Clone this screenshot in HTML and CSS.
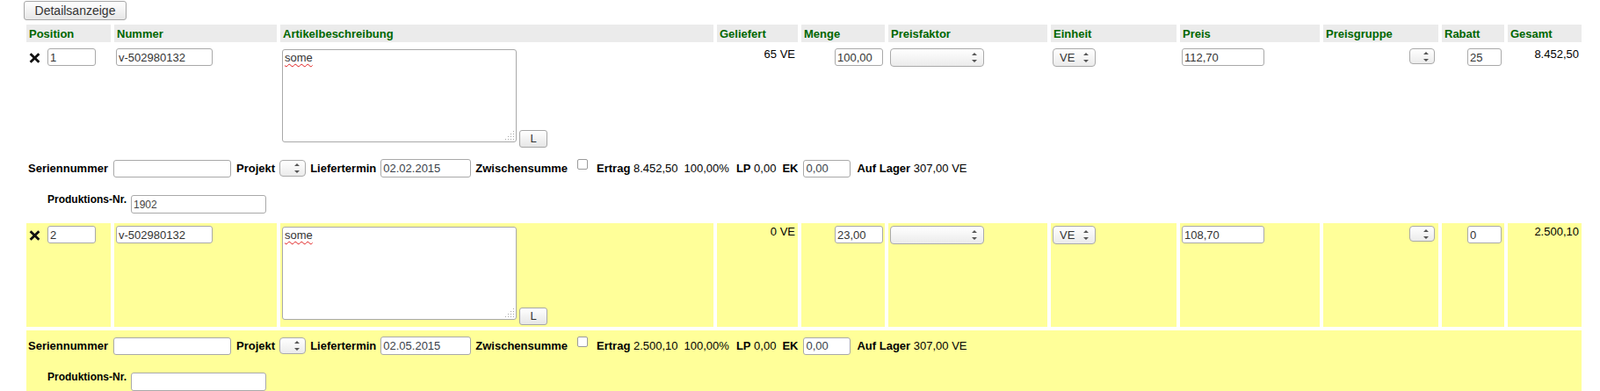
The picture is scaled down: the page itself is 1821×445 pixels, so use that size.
FILE: index.html
```html
<!DOCTYPE html>
<html lang="de">
<head>
<meta charset="utf-8">
<title>Positionen</title>
<link rel="stylesheet" href="styles.css">
</head>
<body>
<div class="page">
  <button class="btn btn-details" type="button">Detailsanzeige</button>
  <table class="items">
    <colgroup>
      <col class="c-pos"><col class="c-num"><col class="c-desc"><col class="c-del"><col class="c-qty"><col class="c-factor"><col class="c-unit"><col class="c-price"><col class="c-group"><col class="c-disc"><col class="c-total">
    </colgroup>
    <thead>
      <tr class="head">
        <th>Position</th><th>Nummer</th><th>Artikelbeschreibung</th><th>Geliefert</th><th>Menge</th><th>Preisfaktor</th><th>Einheit</th><th>Preis</th><th>Preisgruppe</th><th>Rabatt</th><th>Gesamt</th>
      </tr>
    </thead>
    <tbody>
      <tr class="item">
        <td><div class="pos"><svg class="del" width="13" height="12" viewBox="0 0 13 12"><path d="M1.6 1.2 L11.4 10.8 M11.4 1.2 L1.6 10.8" stroke="#111" stroke-width="2.8" fill="none"/></svg><input class="inp w-pos" value="1"></div></td>
        <td><input class="inp w-num" value="v-502980132"></td>
        <td><div class="desc"><div class="textarea"><span class="spell">some</span><svg class="grip" width="11" height="11" viewBox="0 0 11 11"><g fill="#a8a8a8"><rect x="9" y="0" width="1" height="1"/><rect x="6" y="3" width="1" height="1"/><rect x="9" y="3" width="1" height="1"/><rect x="3" y="6" width="1" height="1"/><rect x="6" y="6" width="1" height="1"/><rect x="9" y="6" width="1" height="1"/><rect x="0" y="9" width="1" height="1"/><rect x="3" y="9" width="1" height="1"/><rect x="6" y="9" width="1" height="1"/><rect x="9" y="9" width="1" height="1"/></g></svg></div><button class="btn btn-l" type="button">L</button></div></td>
        <td class="num">65 VE</td>
        <td class="right"><input class="inp w-qty" value="100,00"></td>
        <td><span class="sel w-factor"><span class="sel-text"></span><svg class="arr" width="6" height="11" viewBox="0 0 6 11"><path d="M3 0 L6 3 L0 3 Z M0 8 L6 8 L3 11 Z" fill="#555"/></svg></span></td>
        <td><span class="sel w-unit"><span class="sel-text">VE</span><svg class="arr" width="6" height="11" viewBox="0 0 6 11"><path d="M3 0 L6 3 L0 3 Z M0 8 L6 8 L3 11 Z" fill="#555"/></svg></span></td>
        <td><input class="inp w-price" value="112,70"></td>
        <td class="right"><span class="sel w-group"><span class="sel-text"></span><svg class="arr" width="6" height="11" viewBox="0 0 6 11"><path d="M3 0 L6 3 L0 3 Z M0 8 L6 8 L3 11 Z" fill="#555"/></svg></span></td>
        <td class="right"><input class="inp w-disc" value="25"></td>
        <td class="num">8.452,50</td>
      </tr>
      <tr class="sub">
        <td colspan="11">
          <div class="line1">
            <b>Seriennummer</b>
            <input class="inp w-serial" value="">
            <b class="ml1">Projekt</b>
            <span class="sel w-proj"><span class="sel-text"></span><svg class="arr" width="6" height="11" viewBox="0 0 6 11"><path d="M3 0 L6 3 L0 3 Z M0 8 L6 8 L3 11 Z" fill="#555"/></svg></span>
            <b>Liefertermin</b>
            <input class="inp w-date" value="02.02.2015">
            <b>Zwischensumme</b>
            <input class="chk" type="checkbox">
            <span class="stats">
              <span><b>Ertrag</b> 8.452,50</span>
              <span>100,00%</span>
              <span class="ml1"><b>LP</b> 0,00</span>
              <b>EK</b>
              <input class="inp w-ek" value="0,00">
              <span><b>Auf Lager</b> 307,00 VE</span>
            </span>
          </div>
          <div class="line2">
            <b class="small">Produktions-Nr.</b>
            <input class="inp w-prod" value="1902">
          </div>
        </td>
      </tr>
      <tr class="item alt">
        <td><div class="pos"><svg class="del" width="13" height="12" viewBox="0 0 13 12"><path d="M1.6 1.2 L11.4 10.8 M11.4 1.2 L1.6 10.8" stroke="#111" stroke-width="2.8" fill="none"/></svg><input class="inp w-pos" value="2"></div></td>
        <td><input class="inp w-num" value="v-502980132"></td>
        <td><div class="desc"><div class="textarea"><span class="spell">some</span><svg class="grip" width="11" height="11" viewBox="0 0 11 11"><g fill="#a8a8a8"><rect x="9" y="0" width="1" height="1"/><rect x="6" y="3" width="1" height="1"/><rect x="9" y="3" width="1" height="1"/><rect x="3" y="6" width="1" height="1"/><rect x="6" y="6" width="1" height="1"/><rect x="9" y="6" width="1" height="1"/><rect x="0" y="9" width="1" height="1"/><rect x="3" y="9" width="1" height="1"/><rect x="6" y="9" width="1" height="1"/><rect x="9" y="9" width="1" height="1"/></g></svg></div><button class="btn btn-l" type="button">L</button></div></td>
        <td class="num">0 VE</td>
        <td class="right"><input class="inp w-qty" value="23,00"></td>
        <td><span class="sel w-factor"><span class="sel-text"></span><svg class="arr" width="6" height="11" viewBox="0 0 6 11"><path d="M3 0 L6 3 L0 3 Z M0 8 L6 8 L3 11 Z" fill="#555"/></svg></span></td>
        <td><span class="sel w-unit"><span class="sel-text">VE</span><svg class="arr" width="6" height="11" viewBox="0 0 6 11"><path d="M3 0 L6 3 L0 3 Z M0 8 L6 8 L3 11 Z" fill="#555"/></svg></span></td>
        <td><input class="inp w-price" value="108,70"></td>
        <td class="right"><span class="sel w-group"><span class="sel-text"></span><svg class="arr" width="6" height="11" viewBox="0 0 6 11"><path d="M3 0 L6 3 L0 3 Z M0 8 L6 8 L3 11 Z" fill="#555"/></svg></span></td>
        <td class="right"><input class="inp w-disc" value="0"></td>
        <td class="num">2.500,10</td>
      </tr>
      <tr class="sub alt">
        <td colspan="11">
          <div class="line1">
            <b>Seriennummer</b>
            <input class="inp w-serial" value="">
            <b class="ml1">Projekt</b>
            <span class="sel w-proj"><span class="sel-text"></span><svg class="arr" width="6" height="11" viewBox="0 0 6 11"><path d="M3 0 L6 3 L0 3 Z M0 8 L6 8 L3 11 Z" fill="#555"/></svg></span>
            <b>Liefertermin</b>
            <input class="inp w-date" value="02.05.2015">
            <b>Zwischensumme</b>
            <input class="chk" type="checkbox">
            <span class="stats">
              <span><b>Ertrag</b> 2.500,10</span>
              <span>100,00%</span>
              <span class="ml1"><b>LP</b> 0,00</span>
              <b>EK</b>
              <input class="inp w-ek" value="0,00">
              <span><b>Auf Lager</b> 307,00 VE</span>
            </span>
          </div>
          <div class="line2">
            <b class="small">Produktions-Nr.</b>
            <input class="inp w-prod" value="">
          </div>
        </td>
      </tr>
    </tbody>
  </table>
</div>
</body>
</html>
```
FILE: styles.css
```css
html, body {
  margin: 0;
  padding: 0;
  background: #fff;
}
body {
  font-family: "Liberation Sans", Arial, sans-serif;
  font-size: 13px;
  color: #000;
  overflow: hidden;
}
.page {
  padding: 1px 0 0 27px;
}
.btn {
  font-family: "Liberation Sans", Arial, sans-serif;
  color: #333;
  background: linear-gradient(#ffffff, #e6e6e6);
  border: 1px solid #a6a6a6;
  border-radius: 3px;
  padding: 0;
  display: block;
}
.btn-details {
  width: 117px;
  height: 22px;
  font-size: 14px;
  line-height: 20px;
}
.btn-l {
  width: 32px;
  height: 20px;
  font-size: 13px;
  line-height: 18px;
  flex: none;
}
.items {
  margin: 1px 0 0 -1px;
  border-collapse: separate;
  border-spacing: 4px;
  table-layout: fixed;
  width: 1778px;
}
.c-pos { width: 96px; }
.c-num { width: 185px; }
.c-desc { width: 493px; }
.c-del { width: 92px; }
.c-qty { width: 95px; }
.c-factor { width: 181px; }
.c-unit { width: 143px; }
.c-price { width: 159px; }
.c-group { width: 131px; }
.c-disc { width: 71px; }
.c-total { width: 84px; }

.head th {
  background: #ebebeb;
  color: #006600;
  font-weight: bold;
  font-size: 13px;
  text-align: left;
  height: 20px;
  padding: 0 3px;
  vertical-align: middle;
  white-space: nowrap;
}
.item { height: 118px; }
.item td {
  vertical-align: top;
  padding: 2px;
}
.item.alt td, .sub.alt td {
  background: #ffff99;
}
.item td.num {
  text-align: right;
  padding: 2px 3px 2px 2px;
  line-height: 15px;
}
.item td.right {
  text-align: right;
}
.inp {
  font-family: "Liberation Sans", Arial, sans-serif;
  font-size: 13px;
  color: #333;
  background: #fff;
  border: 1px solid #a9a9a9;
  border-radius: 3px;
  box-sizing: border-box;
  height: 20px;
  padding: 0 2px;
  margin: 0;
  outline: none;
}
.item .inp { margin-top: 1px; vertical-align: top; }
.pos {
  display: flex;
  align-items: center;
  gap: 8px;
  padding-left: 1px;
  margin-top: 1px;
}
.pos .inp { margin-top: 0; }
.del { flex: none; margin-top: 2px; }
.w-pos { width: 55px; }
.w-num { width: 110px; }
.w-qty { width: 55px; }
.w-price { width: 94px; }
.w-disc { width: 39px; margin-right: 1px; }
.w-serial { width: 134px; margin-left: 1px; }
.w-date { width: 103px; height: 21px; color: #3a3f4a; }
.w-ek { width: 54px; margin-left: -1px; color: #3a3f4a; }
.w-prod { width: 154px; height: 21px; font-size: 12px; color: #444; }

.desc {
  display: flex;
  align-items: flex-end;
  gap: 3px;
  padding-top: 2px;
}
.textarea {
  position: relative;
  width: 267px;
  height: 106px;
  box-sizing: border-box;
  border: 1px solid #a9a9a9;
  border-radius: 3px;
  background: #fff;
  color: #333;
  padding: 1px 2px;
  line-height: 15px;
  margin-bottom: 6px;
}
.spell {
  text-decoration: underline wavy #e02020;
  text-decoration-thickness: 1px;
  text-underline-offset: 2px;
  text-decoration-skip-ink: none;
}
.grip {
  position: absolute;
  right: 1px;
  bottom: 1px;
}

.sel {
  display: inline-flex;
  align-items: center;
  justify-content: space-between;
  box-sizing: border-box;
  height: 21px;
  border: 1px solid #aaa;
  border-radius: 4px;
  background: linear-gradient(#ffffff, #ebebeb);
  color: #333;
  font-size: 13px;
  padding: 0 7px 0 7px;
  vertical-align: top;
  margin-top: 1px;
}
.sel .arr { flex: none; }
.w-factor { width: 107px; }
.w-unit { width: 49px; }
.w-group { width: 29px; height: 18px; margin-right: 2px; padding-right: 6px; }
.w-proj { width: 30px; height: 19px; margin-top: 0; padding-right: 6px; }

.sub { height: 76px; }
.sub td {
  vertical-align: top;
  padding: 7px 2px 0 2px;
}
.line1 {
  display: flex;
  align-items: center;
  gap: 5px;
  white-space: nowrap;
  height: 21px;
}
.ml1 { margin-left: 1px; }
.chk {
  appearance: none;
  -webkit-appearance: none;
  width: 12px;
  height: 12px;
  box-sizing: border-box;
  border: 1px solid #9a9a9a;
  border-radius: 2px;
  background: #fff;
  margin: -9px 5px 0 6px;
}
.stats {
  display: flex;
  align-items: center;
  gap: 7px;
}
.line2 {
  display: flex;
  align-items: flex-start;
  gap: 5px;
  margin-top: 20px;
  padding-left: 22px;
}
.small {
  font-size: 12px;
  line-height: 14px;
  margin-top: -2px;
}
```
